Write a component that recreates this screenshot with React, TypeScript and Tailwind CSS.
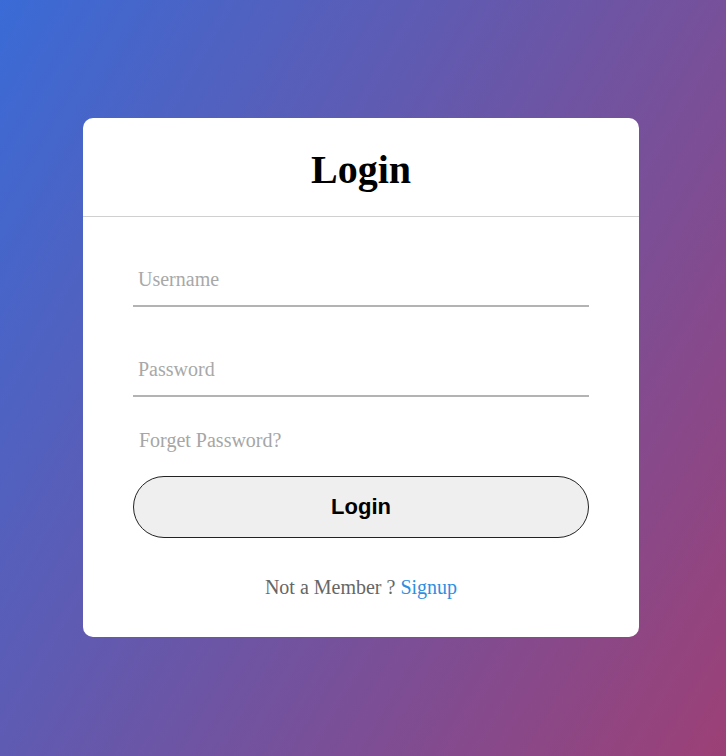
export default function App() {
  return (
    <div className="min-h-screen w-full flex items-center justify-center bg-[linear-gradient(120deg,#3a6bd6,#9c4076)]" style={{ fontFamily: '"Liberation Serif", "Times New Roman", serif' }}>
      <div className="w-[556px] bg-white rounded-[10px] pb-[38px] -translate-x-[2px] -translate-y-[1px]">
        <h1 className="text-center text-[40px] font-bold text-black leading-[46px] pt-[29px] pb-[23px] border-b-[1.5px] border-[#d0d0d0]">Login</h1>
        <form className="px-[50px]" onSubmit={(e) => e.preventDefault()}>
          <div className="mt-[40px] border-b-2 border-[#b3b3b3]">
            <input type="text" placeholder="Username" className="w-full h-[48px] px-[5px] pb-[2px] text-[20px] bg-transparent outline-none placeholder:text-[#a8a8a8]" />
          </div>
          <div className="mt-[40px] border-b-2 border-[#b3b3b3]">
            <input type="password" placeholder="Password" className="w-full h-[48px] px-[5px] pb-[2px] text-[20px] bg-transparent outline-none placeholder:text-[#a8a8a8]" />
          </div>
          <div className="mt-[32px] ml-[6px] text-[20px] leading-[23px] text-[#a6a6a6]">Forget Password?</div>
          <button type="submit" className="mt-[24px] w-full h-[62px] rounded-full border border-[#222] bg-[#efefef] text-[22px] font-bold text-black" style={{ fontFamily: '"Liberation Sans", Arial, sans-serif' }}>Login</button>
          <div className="mt-[38px] text-center text-[20px] leading-[23px] text-[#666666]">
            Not a Member ? <a href="#" className="text-[#2f8ede] no-underline">Signup</a>
          </div>
        </form>
      </div>
    </div>
  );
}
